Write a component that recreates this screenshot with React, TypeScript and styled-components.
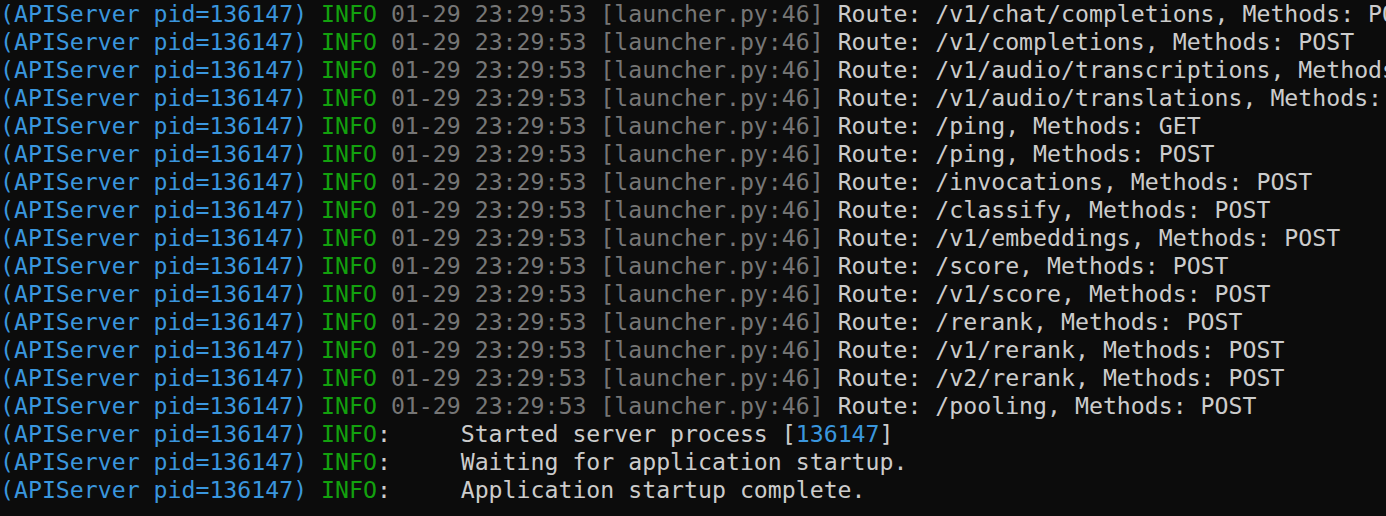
import React from "react";
import styled, { createGlobalStyle } from "styled-components";

const Global = createGlobalStyle`
  html, body { margin: 0; padding: 0; background: #0c0c0c; }
  body { overflow: hidden; }
`;

const Terminal = styled.div`
  width: 1386px;
  height: 516px;
  overflow: hidden;
  background: #0c0c0c;
  color: #cccccc;
  font-family: "DejaVu Sans Mono", "Liberation Mono", monospace;
  font-size: 23.2px;
  line-height: 28px;
  display: flex;
  flex-direction: column;
`;

const Line = styled.div`
  white-space: pre;
  height: 28px;
`;

const Prefix = styled.span`
  color: #3a96dd;
`;

const Level = styled.span`
  color: #13a10e;
`;

const Meta = styled.span`
  color: #767676;
`;

const Accent = styled.span`
  color: #3a96dd;
`;

const routes = [
  "/v1/chat/completions, Methods: POST",
  "/v1/completions, Methods: POST",
  "/v1/audio/transcriptions, Methods: POST",
  "/v1/audio/translations, Methods: POST",
  "/ping, Methods: GET",
  "/ping, Methods: POST",
  "/invocations, Methods: POST",
  "/classify, Methods: POST",
  "/v1/embeddings, Methods: POST",
  "/score, Methods: POST",
  "/v1/score, Methods: POST",
  "/rerank, Methods: POST",
  "/v1/rerank, Methods: POST",
  "/v2/rerank, Methods: POST",
  "/pooling, Methods: POST",
];

const PREFIX = "(APIServer pid=136147)";

export default function App() {
  return (
    <>
      <Global />
      <Terminal>
        {routes.map((r, i) => (
          <Line key={i}>
            <Prefix>{PREFIX}</Prefix> <Level>INFO</Level>{" "}
            <Meta>01-29 23:29:53 [launcher.py:46]</Meta> Route: {r}
          </Line>
        ))}
        <Line>
          <Prefix>{PREFIX}</Prefix> <Level>INFO</Level>:     Started server process [
          <Accent>136147</Accent>]
        </Line>
        <Line>
          <Prefix>{PREFIX}</Prefix> <Level>INFO</Level>:     Waiting for application startup.
        </Line>
        <Line>
          <Prefix>{PREFIX}</Prefix> <Level>INFO</Level>:     Application startup complete.
        </Line>
      </Terminal>
    </>
  );
}
